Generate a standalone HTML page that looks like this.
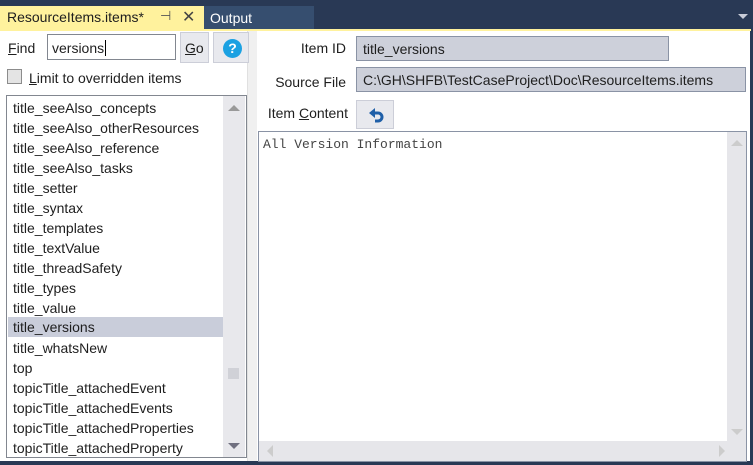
<!DOCTYPE html>
<html><head><meta charset="utf-8"><style>
*{margin:0;padding:0;box-sizing:border-box}
body{width:753px;height:465px;background:#293955;position:relative;overflow:hidden;font-family:"Liberation Sans",sans-serif;font-size:14px;color:#1e1e1e}
.a{position:absolute}
.tab{left:0;top:6px;width:204px;height:24px;background:#fff29d;}
.tab span{position:absolute;left:7px;top:3px;font-size:14px;color:#1e1e1e}
.out{left:204px;top:6px;width:110px;height:24px;background:#364e6f;color:#fff}
.out span{position:absolute;left:6px;top:4px}
.line{left:0;top:29px;width:751px;height:2px;background:#fff29d}
.main{left:0;top:31px;width:750px;height:430px;background:#fff}
.list{left:6px;top:95px;width:241px;height:363px;border:1px solid #828790;background:#fff}
.row{position:absolute;left:6px;height:20px;font-size:14px;line-height:22px}
.sel{background:#c9cdda;left:1px;width:216px;padding-left:5px;line-height:21px}
.field{background:#cdd0da;border:1px solid #8a93a5;font-size:14px;padding:4px 0 0 6px;color:#1e1e1e}
.lbl{font-size:14px;text-align:right}
.btn{background:#e8e9ee;border:1px solid #ccced8}
</style></head><body>
<div class="a tab"><span>ResourceItems.items*</span>
<span style="left:160px;top:2px;font-size:13px;color:#555">⊣</span>
<span style="left:182px;top:1px;font-size:16px;color:#444">✕</span></div>
<div class="a out"><span>Output</span></div>
<div class="a" style="left:738px;top:14px;width:0;height:0;border-left:5px solid transparent;border-right:5px solid transparent;border-top:5px solid #c8ccd8"></div>
<div class="a line"></div>
<div class="a main"></div>
<div class="a" style="left:247px;top:31px;width:10px;height:430px;background:#f0f0f0;border-left:1px solid #e0e0e0"></div>
<div class="a lbl" style="left:8px;top:40px"><u>F</u>ind</div>
<div class="a" style="left:47px;top:34px;width:129px;height:26px;border:1px solid #828790;background:#fff;padding:5px 0 0 4px">versions<span style="border-left:1px solid #000;margin-left:1px"></span></div>
<div class="a btn" style="left:180px;top:32px;width:29px;height:31px;padding:7px 0 0 4px"><u>G</u>o</div>
<div class="a btn" style="left:213px;top:32px;width:36px;height:31px"><div style="position:absolute;left:9px;top:6px;width:19px;height:19px;border-radius:50%;background:#1ba1e2;color:#fff;font-weight:bold;text-align:center;font-size:14px;line-height:19px">?</div></div>
<div class="a" style="left:7px;top:69px;width:15px;height:15px;border:1px solid #8c8c8c;background:#e4e4e4"></div>
<div class="a" style="left:29px;top:70px"><u>L</u>imit to overridden items</div>
<div class="a list">
<div class="row" style="top:1px">title_seeAlso_concepts</div>
<div class="row" style="top:21px">title_seeAlso_otherResources</div>
<div class="row" style="top:41px">title_seeAlso_reference</div>
<div class="row" style="top:61px">title_seeAlso_tasks</div>
<div class="row" style="top:81px">title_setter</div>
<div class="row" style="top:101px">title_syntax</div>
<div class="row" style="top:121px">title_templates</div>
<div class="row" style="top:141px">title_textValue</div>
<div class="row" style="top:161px">title_threadSafety</div>
<div class="row" style="top:181px">title_types</div>
<div class="row" style="top:201px">title_value</div>
<div class="row sel" style="top:221px">title_versions</div>
<div class="row" style="top:241px">title_whatsNew</div>
<div class="row" style="top:261px">top</div>
<div class="row" style="top:281px">topicTitle_attachedEvent</div>
<div class="row" style="top:301px">topicTitle_attachedEvents</div>
<div class="row" style="top:321px">topicTitle_attachedProperties</div>
<div class="row" style="top:341px">topicTitle_attachedProperty</div>
<div class="a" style="left:216px;top:0;width:22px;height:361px;background:#e8e8ec"></div>
<div class="a" style="left:221px;top:9px;border-left:6px solid transparent;border-right:6px solid transparent;border-bottom:6px solid #999"></div>
<div class="a" style="left:221px;top:347px;border-left:6px solid transparent;border-right:6px solid transparent;border-top:6px solid #707080"></div>
<div class="a" style="left:221px;top:272px;width:11px;height:11px;background:#d0d1d7"></div>
</div>
<div class="a lbl" style="left:270px;top:40px;width:76px">Item ID</div>
<div class="a field" style="left:356px;top:36px;width:313px;height:25px">title_versions</div>
<div class="a lbl" style="left:260px;top:74px;width:86px">Source File</div>
<div class="a field" style="left:356px;top:67px;width:390px;height:25px">C:\GH\SHFB\TestCaseProject\Doc\ResourceItems.items</div>
<div class="a lbl" style="left:258px;top:105px;width:90px">Item <u>C</u>ontent</div>
<div class="a btn" style="left:356px;top:100px;width:38px;height:29px">
<svg class="a" style="left:9px;top:5px" width="20" height="18" viewBox="0 0 20 18"><path d="M8 7 H12 A4 4 0 0 1 12 15 H9" fill="none" stroke="#1f5fa8" stroke-width="3"/><path d="M3 7 L9 2 L9 12 Z" fill="#1f5fa8"/></svg></div>
<div class="a" style="left:258px;top:131px;width:489px;height:331px;border:1px solid #8a93a5;background:#fff">
<div class="a" style="left:4px;top:5px;font-family:'Liberation Mono',monospace;font-size:13px;color:#444">All Version Information</div>
<div class="a" style="left:468px;top:0;width:19px;height:329px;background:#e6e6ea"></div>
<div class="a" style="left:0;top:309px;width:487px;height:20px;background:#e6e6ea"></div>
<div class="a" style="left:472px;top:8px;border-left:6px solid transparent;border-right:6px solid transparent;border-bottom:6px solid #ccc"></div>
<div class="a" style="left:472px;top:297px;border-left:6px solid transparent;border-right:6px solid transparent;border-top:6px solid #ccc"></div>
<div class="a" style="left:8px;top:313px;border-top:6px solid transparent;border-bottom:6px solid transparent;border-right:6px solid #ccc"></div>
<div class="a" style="left:460px;top:313px;border-top:6px solid transparent;border-bottom:6px solid transparent;border-left:6px solid #ccc"></div>
</div>
</body></html>
